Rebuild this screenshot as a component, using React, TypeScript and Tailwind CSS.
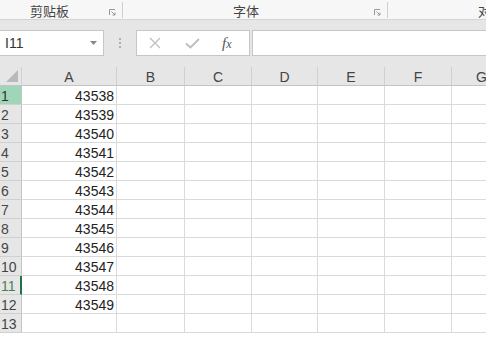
import React from "react";

const cols = [
  { name: "A", w: 95 },
  { name: "B", w: 68 },
  { name: "C", w: 67 },
  { name: "D", w: 66 },
  { name: "E", w: 67 },
  { name: "F", w: 67 },
  { name: "G", w: 60 },
];

const values = [43538, 43539, 43540, 43541, 43542, 43543, 43544, 43545, 43546, 43547, 43548, 43549];

function Launcher() {
  return (
    <svg width="7" height="7" viewBox="0 0 7 7" className="shrink-0">
      <path d="M0.5 6 V0.5 H6" stroke="#9a9a9a" strokeWidth="1" fill="none" />
      <path d="M2.5 2.5 L6 6 M6 3.5 V6 H3.5" stroke="#9a9a9a" strokeWidth="1" fill="none" />
    </svg>
  );
}

export default function App() {
  const font = { fontFamily: '"Liberation Sans", Arial, sans-serif' };
  return (
    <div className="w-[486px] h-[337px] overflow-hidden bg-[#e6e6e6] flex flex-col" style={font}>
      {/* Ribbon group labels */}
      <div
        className="h-[20px] shrink-0 bg-[#f7f7f7] border-b border-[#d4d4d4] flex text-[13px] text-[#444]"
        style={{ fontFamily: '"Noto Sans CJK SC", "Liberation Sans", sans-serif' }}
      >
        <div className="w-[123px] shrink-0 flex items-center pt-[2px]">
          <span className="pl-[30px] leading-none">剪贴板</span>
          <div className="ml-auto mr-[6px] mt-[3px]"><Launcher /></div>
          <div className="w-px h-[16px] bg-[#d0d0d0] self-start" />
        </div>
        <div className="w-[265px] shrink-0 flex items-center pt-[2px]">
          <span className="pl-[110px] leading-none">字体</span>
          <div className="ml-auto mr-[6px] mt-[3px]"><Launcher /></div>
          <div className="w-px h-[16px] bg-[#d0d0d0] self-start" />
        </div>
        <div className="flex-1 flex items-center pt-[2px] overflow-hidden">
          <span className="pl-[90px] leading-none whitespace-nowrap">对</span>
        </div>
      </div>

      {/* Formula bar */}
      <div className="h-[47px] shrink-0 flex items-start pt-[10px]">
        <div className="h-[26px] w-[104px] shrink-0 bg-white border-y border-r border-[#c6c6c6] flex items-center">
          <span className="pl-[5px] text-[14px] text-[#333]">I11</span>
          <svg width="7" height="4" viewBox="0 0 7 4" className="ml-auto mr-[6px]">
            <path d="M0 0 H7 L3.5 4 Z" fill="#8a8a8a" />
          </svg>
        </div>
        <div className="w-[32px] h-[26px] shrink-0 flex items-center justify-center">
          <div className="flex flex-col gap-[2px] items-center -ml-[1px]">
            <div className="w-[2px] h-[2px] bg-[#b0b0b0]" />
            <div className="w-[2px] h-[2px] bg-[#b0b0b0]" />
            <div className="w-[2px] h-[2px] bg-[#b0b0b0]" />
          </div>
        </div>
        <div className="h-[26px] w-[114px] shrink-0 bg-white border border-[#c6c6c6] flex items-center">
          <svg width="12" height="12" viewBox="0 0 12 12" className="ml-[12px]">
            <path d="M1 1 L11 11 M11 1 L1 11" stroke="#bdbdbd" strokeWidth="1.2" />
          </svg>
          <svg width="15" height="12" viewBox="0 0 15 12" className="ml-[24px]">
            <path d="M1 6.5 L5.5 10.5 L14 2" stroke="#bdbdbd" strokeWidth="1.8" fill="none" />
          </svg>
          <span
            className="ml-[22px] text-[15px] italic text-[#555] leading-none"
            style={{ fontFamily: '"Liberation Serif", "Times New Roman", serif' }}
          >
            f<span className="text-[12px]">x</span>
          </span>
        </div>
        <div className="ml-[2px] h-[26px] flex-1 bg-white border-y border-l border-[#c6c6c6]" />
      </div>

      {/* Grid */}
      <div className="flex-1 min-h-0 flex flex-col bg-white">
        {/* Column headers */}
        <div className="h-[19px] shrink-0 flex bg-[#e6e6e6] border-b border-[#c4c4c4]">
          <div className="w-[22px] shrink-0 border-r border-[#d0d0d0] relative">
            <svg width="12" height="12" viewBox="0 0 12 12" className="absolute right-[3px] bottom-[3px]">
              <path d="M12 0 V12 H0 Z" fill="#b9b9b9" />
            </svg>
          </div>
          {cols.map((c) => (
            <div
              key={c.name}
              className="shrink-0 border-r border-[#d0d0d0] flex items-center justify-center text-[14px] text-[#444] leading-none pt-[1px]"
              style={{ width: c.w }}
            >
              {c.name}
            </div>
          ))}
        </div>
        {Array.from({ length: 13 }).map((_, i) => {
          const n = i + 1;
          const isGreen = n === 1;
          const isSel = n === 11;
          return (
            <div key={n} className="h-[19px] shrink-0 flex">
              <div
                className={
                  "w-[22px] shrink-0 border-b border-[#d0d0d0] flex items-center text-[14px] leading-none pl-[1px] pt-[2px] " +
                  (isGreen
                    ? "bg-[#a0d6b8] text-[#333] border-r border-r-[#c4c4c4]"
                    : isSel
                    ? "bg-[#e6e6e6] text-[#4a7f5c] border-r-2 border-r-[#217346]"
                    : "bg-[#e6e6e6] text-[#444] border-r border-r-[#c4c4c4]")
                }
              >
                {n}
              </div>
              {cols.map((c, j) => (
                <div
                  key={c.name}
                  className="shrink-0 border-r border-b border-[#dadada] flex items-center justify-end pr-[2px] pt-[2px] text-[14px] text-[#222] leading-none"
                  style={{ width: c.w }}
                >
                  {j === 0 && n <= 12 ? values[i] : ""}
                </div>
              ))}
            </div>
          );
        })}
      </div>
    </div>
  );
}
